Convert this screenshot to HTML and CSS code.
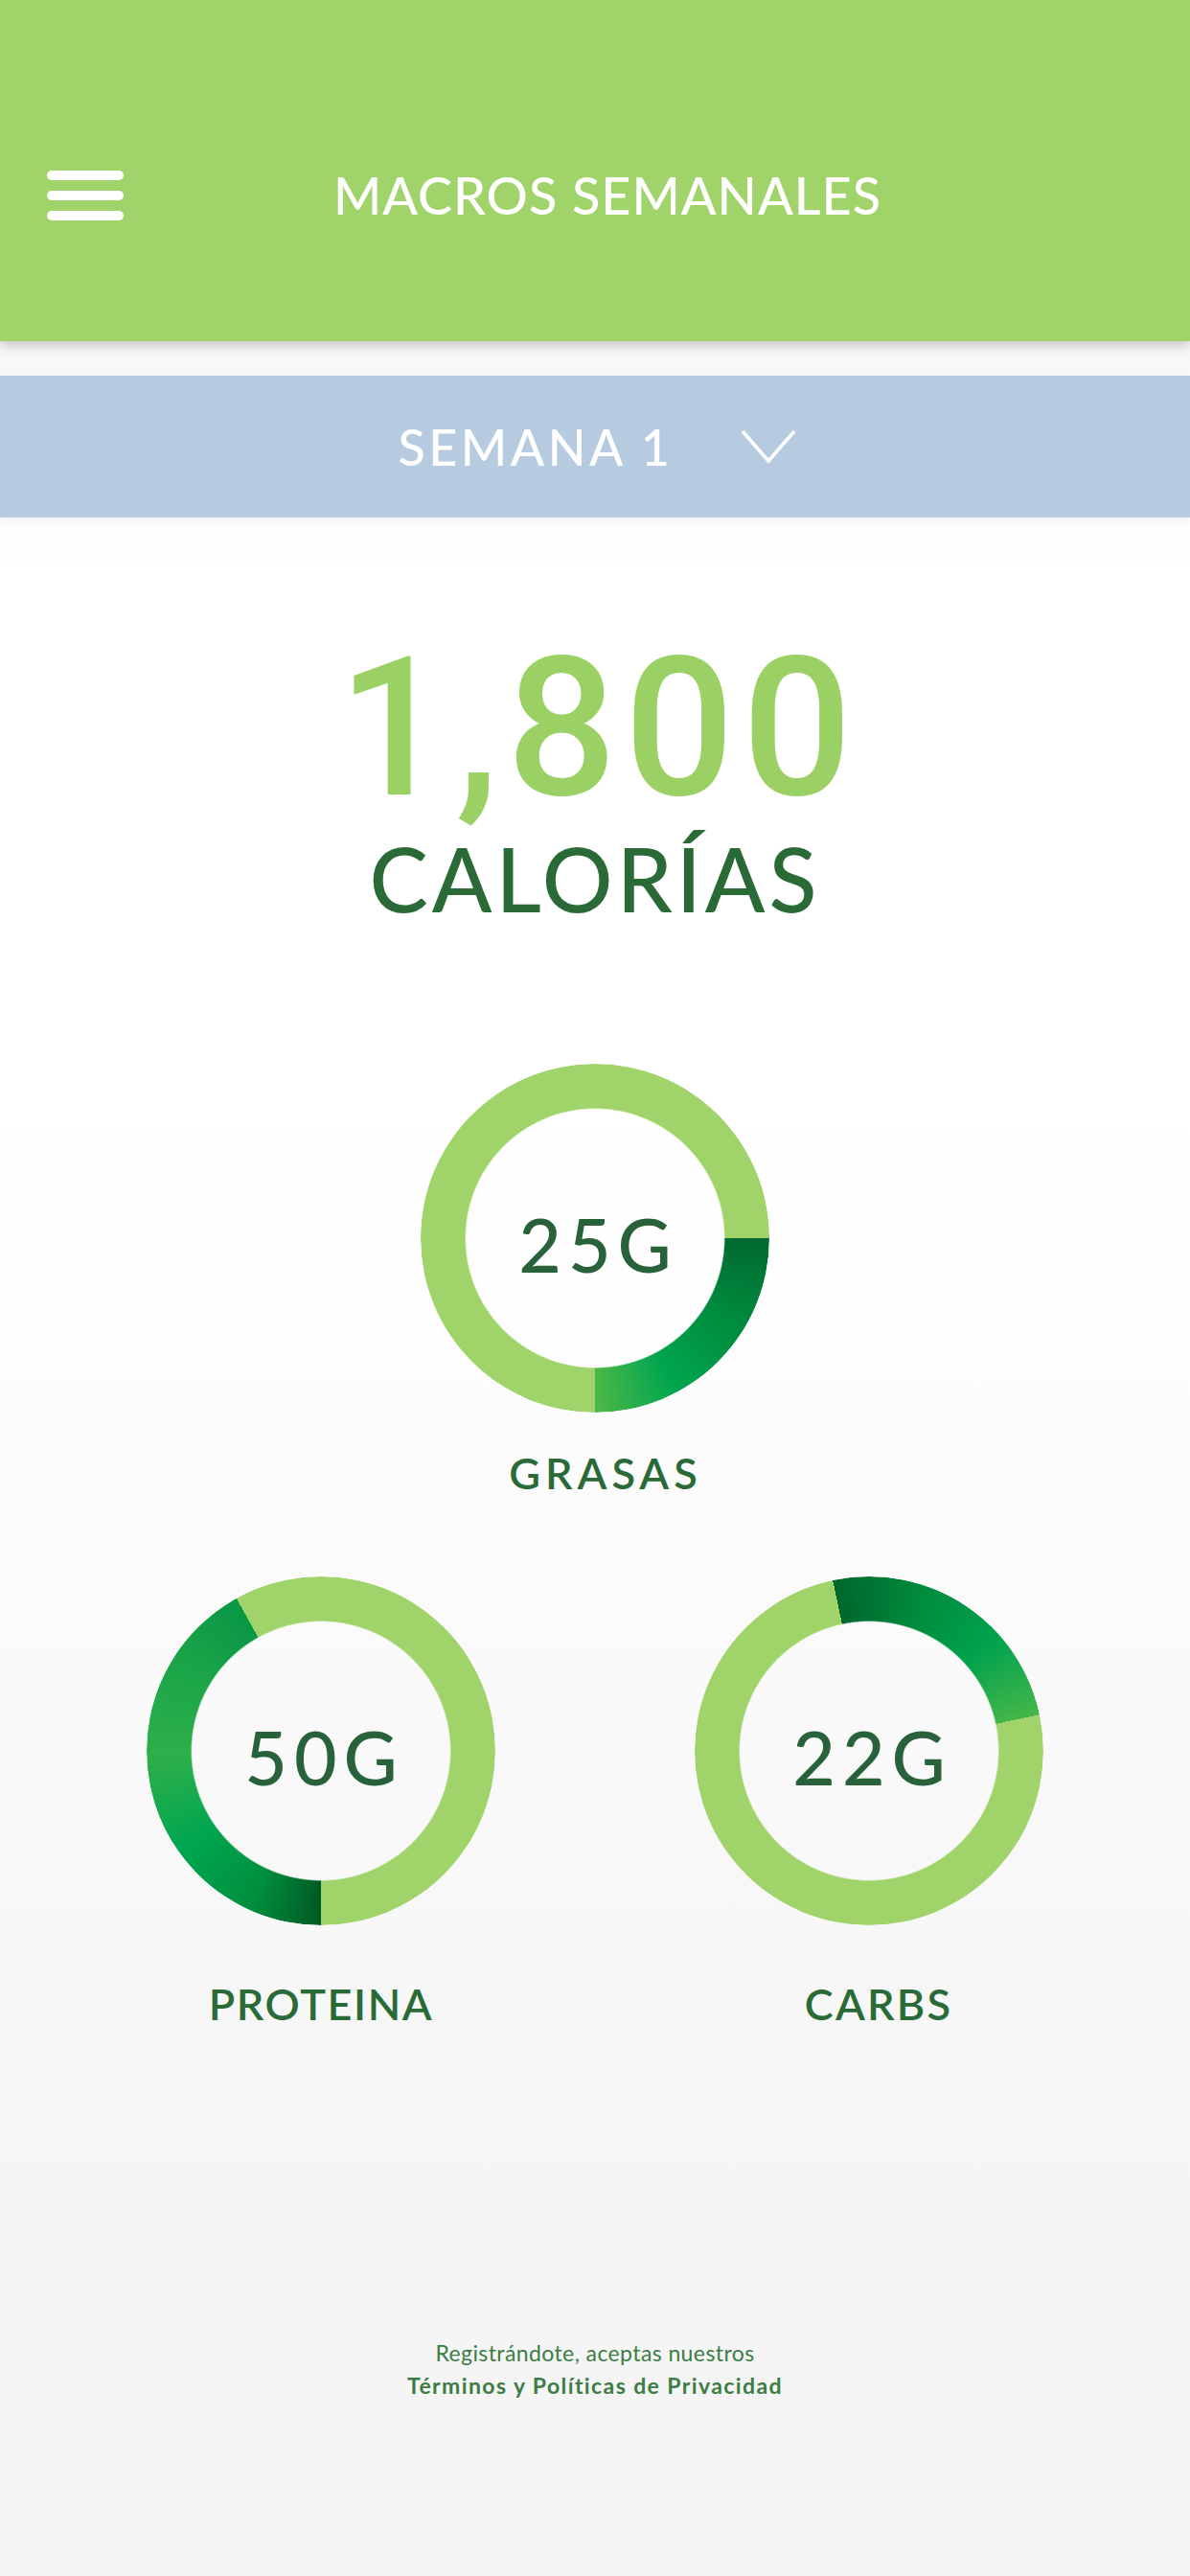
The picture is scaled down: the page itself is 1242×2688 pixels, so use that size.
FILE: index.html
```html
<!DOCTYPE html>
<html lang="es">
<head>
<meta charset="utf-8">
<title>Macros semanales</title>
<link rel="stylesheet" href="styles.css">
</head>
<body>
<header class="topbar">
  <div class="menu" aria-label="Menú">
    <span class="menu-bar"></span>
    <span class="menu-bar"></span>
    <span class="menu-bar"></span>
  </div>
  <h1 class="title">MACROS SEMANALES</h1>
  <div class="spacer"></div>
</header>

<div class="week-bar">
  <span class="week-label">SEMANA 1</span>
  <svg class="chevron" width="58" height="36" viewBox="0 0 58 36">
    <polyline points="2,2 29,33 56,2" fill="none" stroke="#ffffff" stroke-width="3.5" stroke-linejoin="miter"/>
  </svg>
</div>

<main class="content">
  <div class="calories">
    <div class="cal-number">1,800</div>
    <div class="cal-label">CALORÍAS</div>
  </div>

  <section class="macro macro-top">
    <div class="ring ring-fat"><span class="ring-value">25G</span></div>
    <div class="macro-label label-fat">GRASAS</div>
  </section>

  <div class="macro-row">
    <section class="macro">
      <div class="ring ring-protein"><span class="ring-value">50G</span></div>
      <div class="macro-label">PROTEINA</div>
    </section>
    <section class="macro">
      <div class="ring ring-carbs"><span class="ring-value">22G</span></div>
      <div class="macro-label label-carbs">CARBS</div>
    </section>
  </div>

  <footer class="legal">
    <p class="legal-line">Registrándote, aceptas nuestros</p>
    <p class="legal-line legal-strong">Términos y Políticas de Privacidad</p>
  </footer>
</main>
</body>
</html>
```

FILE: styles.css
```css
* { box-sizing: border-box; }

html, body {
  margin: 0;
  padding: 0;
}

body {
  width: 1242px;
  min-height: 2688px;
  font-family: "Lato", "Noto Sans", sans-serif;
  background: linear-gradient(to bottom, #f8f8f8 0px, #f8f8f8 392px, #ffffff 600px, #ffffff 1150px, #f5f5f5 2300px, #f5f5f5 100%);
  overflow: hidden;
}

/* ---------- top bar ---------- */
.topbar {
  height: 356px;
  background: #a0d46a;
  display: grid;
  grid-template-columns: 1fr auto 1fr;
  align-items: center;
  padding: 52px 0 0 26px;
  box-shadow: 0 4px 12px rgba(0, 0, 0, 0.22);
  position: relative;
  z-index: 2;
}

.menu {
  justify-self: start;
  margin-left: 23px;
  display: flex;
  flex-direction: column;
  gap: 11px;
  width: 80px;
}

.menu-bar {
  display: block;
  height: 10px;
  border-radius: 5px;
  background: #ffffff;
}

.title {
  margin: 0;
  color: #ffffff;
  font-size: 54px;
  font-weight: 500;
  letter-spacing: 1px;
  line-height: 1;
}

/* ---------- week selector ---------- */
.week-bar {
  margin-top: 36px;
  height: 148px;
  background: #b6cbe0;
  display: flex;
  align-items: center;
  justify-content: center;
  gap: 70px;
  padding-left: 4px;
  box-shadow: 0 3px 8px rgba(0, 0, 0, 0.05);
  position: relative;
  z-index: 1;
}

.week-label {
  color: #ffffff;
  font-size: 52px;
  font-weight: 500;
  letter-spacing: 3.5px;
  line-height: 1;
}

.chevron { display: block; }

/* ---------- content ---------- */
.content {
  display: flex;
  flex-direction: column;
  align-items: center;
}

.calories {
  display: flex;
  flex-direction: column;
  align-items: center;
}

.cal-number {
  margin-top: 119px;
  padding-left: 8px;
  color: #9bd164;
  font-family: "Roboto", "Lato", sans-serif;
  font-size: 202px;
  font-weight: 500;
  line-height: 1;
  letter-spacing: 8px;
}

.cal-label {
  margin-top: 1px;
  color: #2a6a36;
  font-size: 92px;
  font-weight: 500;
  line-height: 1.2;
  letter-spacing: 4px;
}

.macro {
  display: flex;
  flex-direction: column;
  align-items: center;
}

.macro-top {
  margin-top: 138px;
}

.ring {
  width: 364px;
  height: 364px;
  border-radius: 50%;
  display: flex;
  align-items: center;
  justify-content: center;
  position: relative;
}

.ring::before {
  content: "";
  position: absolute;
  inset: 0;
  border-radius: 50%;
  -webkit-mask: radial-gradient(circle, transparent 134.5px, #000 136px);
  mask: radial-gradient(circle, transparent 134.5px, #000 136px);
}

.ring-fat::before {
  background: conic-gradient(from 0deg,
    #a0d46a 0deg 90deg,
    #006a2f 90deg,
    #008a3e 120deg,
    #00a54f 152deg,
    #4db848 180deg,
    #a0d46a 180deg 360deg);
}

.ring-protein::before {
  background: conic-gradient(from 0deg,
    #a0d46a 0deg 180deg,
    #005a25 180deg,
    #00903e 205deg,
    #00a650 235deg,
    #2eaf4a 268deg,
    #1ba648 300deg,
    #0a9745 331deg,
    #a0d46a 331deg 360deg);
}

.ring-carbs::before {
  background: conic-gradient(from -12deg,
    #00662c 0deg,
    #008a3d 30deg,
    #00a24e 60deg,
    #44b649 90deg,
    #a0d46a 90deg 360deg);
}

.ring-value {
  position: relative;
  padding: 12px 0 0 7px;
  color: #27623a;
  font-size: 77px;
  font-weight: 500;
  line-height: 1;
  letter-spacing: 7px;
}

.macro-label {
  margin-top: 60px;
  color: #2a6a36;
  font-size: 45px;
  font-weight: 600;
  line-height: 1;
  letter-spacing: 1.6px;
}

.label-fat {
  margin-top: 41px;
  margin-left: 22px;
  letter-spacing: 5px;
}

.label-carbs {
  margin-left: 20px;
  letter-spacing: 2.2px;
}

.macro-row {
  margin-top: 85px;
  display: flex;
  justify-content: center;
  gap: 208px;
}

.legal {
  margin-top: 324px;
  text-align: center;
  color: #3b7d45;
}

.legal-line {
  margin: 0;
  font-size: 23px;
  line-height: 34px;
  font-weight: 400;
  letter-spacing: 0.4px;
}

.legal-strong {
  font-weight: 700;
  letter-spacing: 1.4px;
}
```
